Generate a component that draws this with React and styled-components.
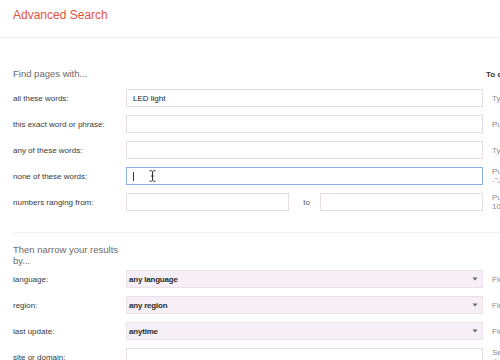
import React from 'react';
import styled, { createGlobalStyle } from 'styled-components';

const Global = createGlobalStyle`
  html, body { margin: 0; padding: 0; background: #fff; overflow: hidden; }
  body { font-family: "Liberation Sans", Arial, sans-serif; }
`;

const Page = styled.div`
  width: 760px;
`;

const Header = styled.header`
  height: 37px;
  padding-left: 13px;
  border-bottom: 1px solid #f5edf5;
`;

const Title = styled.h1`
  margin: 0;
  padding-top: 8px;
  font-size: 12px;
  line-height: 14px;
  font-weight: normal;
  color: #e2533f;
`;

const Section = styled.section`
  margin-left: 13px;
  padding-top: ${p => p.$top}px;
  padding-bottom: ${p => p.$bottom}px;
  border-bottom: ${p => (p.$divided ? '1px solid #f5edf5' : 'none')};
`;

const HeadRow = styled.div`
  display: flex;
  align-items: baseline;
  margin-bottom: ${p => p.$after}px;
`;

const Heading = styled.h2`
  margin: 0;
  width: 113px;
  flex: none;
  font-size: 9.5px;
  line-height: 11px;
  font-weight: normal;
  color: #6a6a6a;
`;

const TipHead = styled.div`
  margin-left: 360px;
  font-size: 8px;
  font-weight: bold;
  color: #333;
  white-space: nowrap;
`;

const Grid = styled.div`
  display: grid;
  grid-template-columns: 113px 357px 250px;
  grid-auto-rows: 18px;
  row-gap: 8px;
  align-items: center;
`;

const Label = styled.label`
  font-size: 8px;
  color: #3a3a3a;
  white-space: nowrap;
`;

const FieldWrap = styled.div`
  position: relative;
  display: flex;
  align-items: center;
  height: 18px;
`;

const Input = styled.div`
  box-sizing: border-box;
  height: 18px;
  width: ${p => p.$w || '100%'};
  flex: none;
  display: flex;
  align-items: center;
  padding: 0 6px;
  border: 1px solid ${p => (p.$focus ? '#8eaee8' : '#e6dce6')};
  background: #fff;
  font-size: 8px;
  color: #222;
`;

const Caret = styled.span`
  display: inline-block;
  width: 1px;
  height: 9px;
  background: #333;
`;

const IBeam = styled.svg`
  position: absolute;
  left: 23px;
  top: 3px;
`;

const To = styled.span`
  flex: none;
  width: 31px;
  text-align: center;
  font-size: 8px;
  color: #555;
  margin-left: 2px;
  margin-right: -2px;
`;

const Select = styled.div`
  box-sizing: border-box;
  height: 18px;
  width: 100%;
  display: flex;
  align-items: center;
  justify-content: space-between;
  padding: 0 4px 0 2px;
  border: 1px solid #ebe1eb;
  background: #f6f0f6;
  font-size: 8px;
  font-weight: bold;
  letter-spacing: -0.2px;
  color: #2a2a2a;
`;

const Tip = styled.div`
  padding-left: 9px;
  font-size: 8px;
  line-height: 9px;
  color: #8a8a8a;
  width: 236px;
`;

const Keep = styled.span`
  white-space: nowrap;
`;

const Arrow = () => (
  <svg width="6" height="4" viewBox="0 0 6 4">
    <path d="M0.5 0.5 H5.5 L3 3.5 Z" fill="#666" />
  </svg>
);

const textRows = [
  { label: 'all these words:', value: 'LED light', tip: 'Type the important words: tricolor rat terrier' },
  { label: 'this exact word or phrase:', value: '', tip: 'Put exact words in quotes: "rat terrier"' },
  { label: 'any of these words:', value: '', tip: 'Type OR between all the words you want: miniature OR standard' },
  {
    label: 'none of these words:',
    value: '',
    focus: true,
    tip: (
      <>
        Put a minus sign just before words you don’t want: -rodent, <Keep>-"Jack Russell"</Keep>
      </>
    ),
  },
];

const selectRows = [
  { label: 'language:', value: 'any language', tip: 'Find pages in the language you select.' },
  { label: 'region:', value: 'any region', tip: 'Find pages published in a particular region.' },
  { label: 'last update:', value: 'anytime', tip: 'Find pages updated within the time you specify.' },
];

export default function App() {
  return (
    <Page>
      <Global />
      <Header>
        <Title>Advanced Search</Title>
      </Header>

      <Section $top={30} $bottom={21} $divided>
        <HeadRow $after={10}>
          <Heading>Find pages with...</Heading>
          <TipHead>To do this in the search box.</TipHead>
        </HeadRow>
        <Grid>
          {textRows.map(r => (
            <React.Fragment key={r.label}>
              <Label>{r.label}</Label>
              <FieldWrap>
                <Input $focus={r.focus}>
                  {r.value}
                  {r.focus && <Caret />}
                </Input>
                {r.focus && (
                  <IBeam width="7" height="12" viewBox="0 0 7 12">
                    <path d="M0.5 0.8 H2.5 L3.5 1.6 L4.5 0.8 H6.5 M3.5 1.6 V10.4 M0.5 11.2 H2.5 L3.5 10.4 L4.5 11.2 H6.5 M2 6 H5" stroke="#333" strokeWidth="1" fill="none" />
                  </IBeam>
                )}
              </FieldWrap>
              <Tip>{r.tip}</Tip>
            </React.Fragment>
          ))}
          <Label>numbers ranging from:</Label>
          <FieldWrap>
            <Input $w="163px" />
            <To>to</To>
            <Input $w="163px" />
          </FieldWrap>
          <Tip>Put 2 periods between the numbers and add a unit of measure: 10..35 lb, $300..$500, 2010..2011</Tip>
        </Grid>
      </Section>

      <Section $top={11} $bottom={20}>
        <HeadRow $after={4}>
          <Heading>Then narrow your results by...</Heading>
        </HeadRow>
        <Grid>
          {selectRows.map(r => (
            <React.Fragment key={r.label}>
              <Label>{r.label}</Label>
              <Select>
                <span>{r.value}</span>
                <Arrow />
              </Select>
              <Tip>{r.tip}</Tip>
            </React.Fragment>
          ))}
          <Label>site or domain:</Label>
          <FieldWrap>
            <Input />
          </FieldWrap>
          <Tip>Search one site (like wikipedia.org) or limit your results to a domain like .edu, .org or .gov</Tip>
        </Grid>
      </Section>
    </Page>
  );
}
